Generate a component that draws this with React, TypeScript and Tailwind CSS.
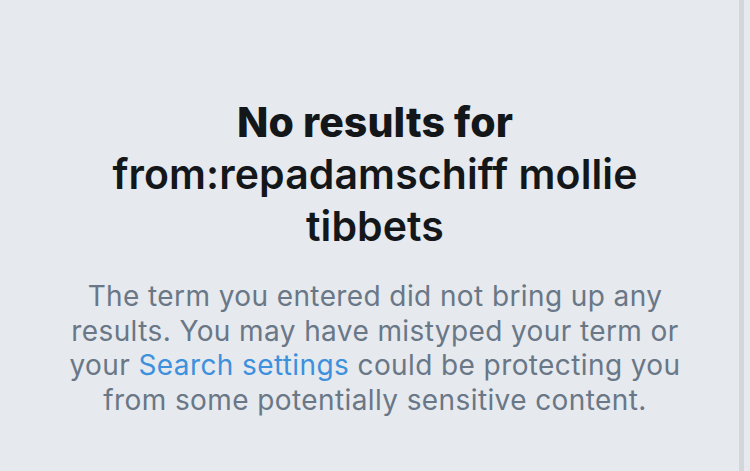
import React from "react"

const App: React.FC = () => {
  return (
    <div className="relative flex h-[471px] w-[750px] justify-center overflow-hidden bg-[#e6e9ee] font-['Inter','Noto_Sans',sans-serif]">
      {/* right column divider */}
      <div className="absolute top-0 right-[6px] h-full w-[5px] bg-[#d3d6db]" />

      <div className="flex w-[640px] flex-col items-center pt-[96px] text-center">
        <h1 className="text-[41px] leading-[52px] font-semibold tracking-[0.1px] text-[#14171a]">
          <span className="font-extrabold">No results for</span>
          <br />
          from:repadamschiff mollie tibbets
        </h1>
        <p className="mt-[27px] text-[28px] leading-[34.5px] tracking-[0.4px] text-[#697786]">
          The term you entered did not bring up any results. You may have mistyped your term or
          your <span className="text-[#3d91dc]">Search settings</span> could be protecting you
          from some potentially sensitive content.
        </p>
      </div>
    </div>
  )
}

export default App
